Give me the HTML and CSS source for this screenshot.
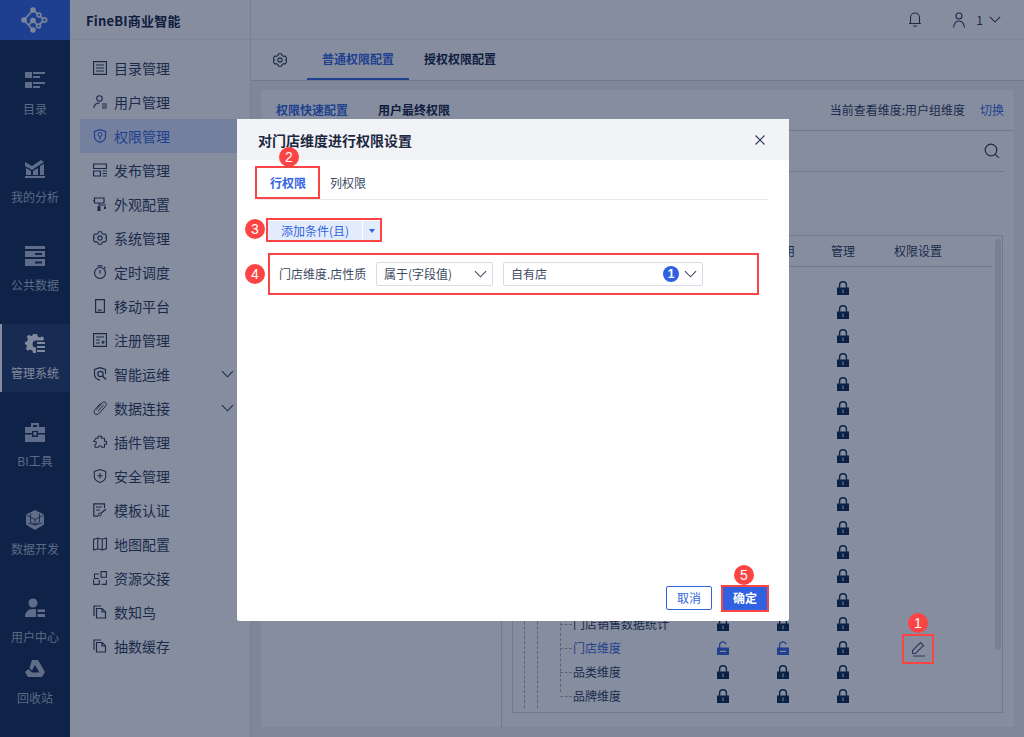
FILE: index.html
```html
<!DOCTYPE html>
<html lang="zh-CN">
<head>
<meta charset="utf-8">
<title>FineBI商业智能</title>
<link rel="stylesheet" href="styles.css">
</head>
<body>
<svg class="defs" width="0" height="0" aria-hidden="true">
  <defs>
    <symbol id="lock" viewBox="0 0 12 14"><path d="M2.6 7V4.2a3.4 3.4 0 0 1 6.8 0V7" fill="none" stroke="currentColor" stroke-width="1.4"/><path d="M0 6.5h12V14H0z" fill="currentColor"/><path d="M5.4 8.6h1.2v3.6H5.4z" fill="#c5cad6"/></symbol>
    <symbol id="unlock" viewBox="0 0 12 14"><path d="M2.6 7V4.2a3.4 3.4 0 0 1 6.6-1" fill="none" stroke="currentColor" stroke-width="1.3"/><path d="M0 6.5h12V14H0z" fill="currentColor"/><path d="M3 9.8h6v1.2H3z" fill="#fff"/></symbol>
    <symbol id="chev" viewBox="0 0 14 8"><path d="M1 1l6 6 6-6" fill="none" stroke="currentColor" stroke-width="1.2"/></symbol>
    <symbol id="page" viewBox="0 0 14 14"><path d="M1 11V1h7M3.5 13V3.5H9L12.5 7v6z" fill="none" stroke="currentColor" stroke-width="1.2"/><path d="M9 3.5V7h3.5" fill="none" stroke="currentColor" stroke-width="1.2"/></symbol>
    <symbol id="gear" viewBox="0 0 14 14"><path d="M5.4.8h3.2l.5 1.700 1.500.9 1.700-.4 1.600 2.700L12.600 7l1.300 1.300-1.600 2.700-1.700-.4-1.500.9-.5 1.700H5.400l-.5-1.700-1.500-.9-1.700.4L.1 8.300 1.400 7 .1 5.700l1.600-2.700 1.700.4 1.500-.9z" fill="none" stroke="currentColor" stroke-width="1.100" stroke-linejoin="round"/><circle cx="7" cy="7" r="2.100" fill="none" stroke="currentColor" stroke-width="1.100"/></symbol>
  </defs>
</svg>

<div class="app">
  <aside class="rail">
    <div class="logo">
      <svg class="logo-mark" viewBox="0 0 28 28"><g fill="none" stroke="#dfe5f2" stroke-width="1.800"><path d="M12 4L3 14l9 10M12 4l6 5M12 14l-4 5M12 14l5 6 6-6-5-5"/><circle cx="18" cy="9" r="1.900" fill="#2f61e1"/><circle cx="23.500" cy="14" r="2.100" fill="#2f61e1"/><circle cx="17.500" cy="20" r="1.900" fill="#2f61e1"/></g><g fill="#eef1f7"><circle cx="12" cy="4" r="2.800"/><circle cx="3" cy="14" r="2.800"/><circle cx="12" cy="14.500" r="2.800"/><circle cx="12" cy="24" r="2.800"/></g></svg>
    </div>
    <nav class="rail-nav">
      <a class="rail-item">
        <svg class="rail-icon" viewBox="0 0 20 20"><path d="M0 2h7v6H0zM0 12h7v6H0zM8 2h12v2H8zM8 6h7v2H8zM8 12h12v2H8zM8 16h7v2H8z"/></svg>
        <span>目录</span>
      </a>
      <a class="rail-item">
        <svg class="rail-icon" viewBox="0 0 20 20"><path d="M0 4l7 4 9-6 3 2-12 8-7-4zM1 10l5 3v4H1zM8 13l5-3v7H8zM15 8l4-2v11h-4zM0 18h20v2H0z"/></svg>
        <span>我的分析</span>
      </a>
      <a class="rail-item">
        <svg class="rail-icon" viewBox="0 0 20 20"><path d="M0 0h20v3H0zM0 5h20v6H0zM0 13h20v7H0z" fill-rule="evenodd"/><path d="M10 7h7v2h-7zM10 15.500h7v2h-7z" fill="#0f2b51"/></svg>
        <span>公共数据</span>
      </a>
      <a class="rail-item rail-item-active">
        <svg class="rail-icon" viewBox="0 0 20 20"><path d="M8 0h4l.6 2.500 2.400 1 2.200-1.300 2 2-1.200 2.300H11a3.500 3.500 0 1 0 0 7v5.500H8l-.6-2.500-2.400-1-2.200 1.300-2-2L2 12.500 1 10.500-.5 10V8l2.500-.6 1-2.400L1.700 2.800l2-2L6 2l1.400-.5z"/><path d="M12 8h8v2h-8zM12 12h8v2h-8zM12 16h8v2h-8z"/></svg>
        <span>管理系统</span>
      </a>
      <a class="rail-item">
        <svg class="rail-icon" viewBox="0 0 20 20"><path d="M6 1h8v4h-2V3H8v2H6zM0 5h20v6h-7V9H7v2H0zM0 12.500h7V15h6v-2.500h7V20H0zM8.500 10h3v3.500h-3z"/></svg>
        <span>BI工具</span>
      </a>
      <a class="rail-item">
        <svg class="rail-icon" viewBox="0 0 20 20"><path d="M10 0l9 4.500v10L10 20l-9-5.500v-10z"/><path d="M1.500 5L10 9.500 18.500 5M10 9.500V15M3 13l7 2 7-2M5.500 3.500v8.500l4.500 3 4.500-3V3.500" fill="none" stroke="#0f2b51" stroke-width=".8"/></svg>
        <span>数据开发</span>
      </a>
      <a class="rail-item">
        <svg class="rail-icon" viewBox="0 0 20 20"><circle cx="8" cy="5" r="4.500"/><path d="M0 19c0-5 3-8 8-8 1 0 2 .1 3 .5V19zM12.500 11.500H20v2.500h-7.500zM12.500 16H20v3h-7.500z"/></svg>
        <span>用户中心</span>
      </a>
      <a class="rail-item rail-item-last">
        <svg class="rail-icon" viewBox="0 0 20 20"><path d="M7 1h6l7 12-3 5-7-12-3 5.500L4.500 9zM0 13l3.500-3 3.500 3.500h12L17 18H3z"/></svg>
        <span>回收站</span>
      </a>
    </nav>
  </aside>

  <aside class="menu">
    <div class="brand">FineBI商业智能</div>
    <nav class="menu-list">
      <a class="menu-item"><svg class="menu-icon" viewBox="0 0 14 14"><path d="M.6.6h12.800v12.800H.6zM3 4h8M3 7h8M3 10h8" fill="none" stroke="currentColor" stroke-width="1.2"/></svg><span>目录管理</span></a>
      <a class="menu-item"><svg class="menu-icon" viewBox="0 0 14 14"><circle cx="6.500" cy="3.500" r="2.700" fill="none" stroke="currentColor" stroke-width="1.1"/><path d="M.8 13c.3-3 2.500-5 6-5M9 9h5M9 11h5M9 13h5" fill="none" stroke="currentColor" stroke-width="1.1"/></svg><span>用户管理</span></a>
      <a class="menu-item menu-item-active"><svg class="menu-icon" viewBox="0 0 14 14"><path d="M7 .6l5.500 1.800v5.100c0 2.900-2.500 4.900-5.500 5.900-3-1-5.500-3-5.500-5.900V2.400z" fill="none" stroke="currentColor" stroke-width="1.200"/><circle cx="7" cy="5.500" r="2" fill="none" stroke="currentColor"/><path d="M7 7.500v3" stroke="currentColor" stroke-width="1.200"/></svg><span>权限管理</span></a>
      <a class="menu-item"><svg class="menu-icon" viewBox="0 0 14 14"><path d="M.6 1h12.800v4.500H.6zM.6 8h6.800v5H.6zM9.500 8H14M9.500 10.500H14M9.500 13H14" fill="none" stroke="currentColor" stroke-width="1.200"/></svg><span>发布管理</span></a>
      <a class="menu-item"><svg class="menu-icon" viewBox="0 0 14 14"><path d="M1.500 1h9.500v5H1.500zM6 6v2h7M0 3.500h1.500" fill="none" stroke="currentColor" stroke-width="1.200"/><path d="M4.500 9h3v5h-3zM11 9.500h2V12h-2z" fill="currentColor"/></svg><span>外观配置</span></a>
      <a class="menu-item"><svg class="menu-icon"><use href="#gear"/></svg><span>系统管理</span></a>
      <a class="menu-item"><svg class="menu-icon" viewBox="0 0 14 14"><circle cx="7" cy="8" r="5.500" fill="none" stroke="currentColor" stroke-width="1.200"/><path d="M7 5v3.500M4.500.8h5M11 2l1.500 1.500" fill="none" stroke="currentColor" stroke-width="1.200"/></svg><span>定时调度</span></a>
      <a class="menu-item"><svg class="menu-icon" viewBox="0 0 14 14"><path d="M2.600.6h8.800v12.800H2.600z" fill="none" stroke="currentColor" stroke-width="1.200"/><path d="M5 10.500h3.500v1.200H5z" fill="currentColor"/></svg><span>移动平台</span></a>
      <a class="menu-item"><svg class="menu-icon" viewBox="0 0 14 14"><path d="M.6.6h12.800v12.800H.6zM3 4h8M3 7h4M3 10h4M10 7.500v3.500M8.300 9.200h3.400" fill="none" stroke="currentColor" stroke-width="1.200"/></svg><span>注册管理</span></a>
      <a class="menu-item"><svg class="menu-icon" viewBox="0 0 14 14"><path d="M7 .6l5.500 1.800V7M7 13.400C4 12.400 1.500 10.400 1.500 7.500V2.400L7 .6" fill="none" stroke="currentColor" stroke-width="1.200"/><circle cx="7.500" cy="7" r="2.700" fill="none" stroke="currentColor" stroke-width="1.200"/><path d="M9.500 9l3.500 3.500" stroke="currentColor" stroke-width="1.400"/></svg><span>智能运维</span><svg class="menu-chev"><use href="#chev"/></svg></a>
      <a class="menu-item"><svg class="menu-icon" viewBox="0 0 14 14"><path d="M3.500 8.500L9 2c1-1.200 2.800-1.300 3.700-.4s.7 2.500-.3 3.700L6.300 12.300c-1.300 1.400-3.300 1.500-4.400.5S.9 9.800 2 8.500L7.500 2.300M5 10.200l5.500-6.400" fill="none" stroke="currentColor" stroke-width="1"/></svg><span>数据连接</span><svg class="menu-chev"><use href="#chev"/></svg></a>
      <a class="menu-item"><svg class="menu-icon" viewBox="0 0 14 14"><path d="M5 1.200h3.500v2h3v3h2v3h-2v3H8.500c0-2-3-2-3 0H2V9.500c1.800 0 1.800-3 0-3H.6L3 3.200h2z" fill="none" stroke="currentColor" stroke-width="1.100" stroke-linejoin="round"/></svg><span>插件管理</span></a>
      <a class="menu-item"><svg class="menu-icon" viewBox="0 0 14 14"><path d="M7 .6l5.700 1.900v5c0 2.900-2.600 4.900-5.700 5.900-3.100-1-5.700-3-5.700-5.900v-5zM7 4v5.500M4.300 6.800h5.400" fill="none" stroke="currentColor" stroke-width="1.100"/></svg><span>安全管理</span></a>
      <a class="menu-item"><svg class="menu-icon" viewBox="0 0 14 14"><path d="M11.500 5V.8H.8v12.400H5M3 4h6M3 7h4" fill="none" stroke="currentColor" stroke-width="1.200"/><circle cx="6.800" cy="11.500" r="1.500" fill="none" stroke="currentColor"/><path d="M8 10.300l5-4.300" stroke="currentColor" stroke-width="1.200"/></svg><span>模板认证</span></a>
      <a class="menu-item"><svg class="menu-icon" viewBox="0 0 14 14"><path d="M.6 2.200L4.800 1l4.400 1.200L13.400 1v10.800l-4.200 1.200-4.400-1.200-4.200 1.200zM4.800 1v10.800M9.200 2.200V13" fill="none" stroke="currentColor" stroke-width="1.100"/></svg><span>地图配置</span></a>
      <a class="menu-item"><svg class="menu-icon" viewBox="0 0 14 14"><path d="M8 .6h5.400v5.700H8zM8 .6v6M6 3H1.500v4.500H6M.6 8.500v4.900h5.700V9M8.500 13.400h4.900V9" fill="none" stroke="currentColor" stroke-width="1.100"/></svg><span>资源交接</span></a>
      <a class="menu-item"><svg class="menu-icon"><use href="#page"/></svg><span>数知鸟</span></a>
      <a class="menu-item"><svg class="menu-icon"><use href="#page"/></svg><span>抽数缓存</span></a>
    </nav>
  </aside>

  <main class="main">
    <header class="topbar">
      <svg class="top-bell" viewBox="0 0 14 16"><path d="M2.500 12.500V6.500a4.500 4.500 0 0 1 9 0v6zM1 12.500h12M5 15h4" fill="none" stroke="currentColor" stroke-width="1.100"/></svg>
      <div class="top-user">
        <svg class="top-user-icon" viewBox="0 0 14 16"><circle cx="7" cy="4" r="3" fill="none" stroke="currentColor" stroke-width="1.100"/><path d="M1.500 15.500C2 11 4 9 7 9s5 2 5.500 6.500" fill="none" stroke="currentColor" stroke-width="1.100"/></svg>
        <span>1</span>
        <svg class="top-chev"><use href="#chev"/></svg>
      </div>
    </header>
    <div class="tabs">
      <svg class="tabs-gear"><use href="#gear"/></svg>
      <a class="tab tab-on">普通权限配置</a>
      <a class="tab">授权权限配置</a>
    </div>
    <section class="content">
      <div class="card">
        <div class="card-head">
          <a class="card-tab card-tab-on">权限快速配置</a>
          <a class="card-tab">用户最终权限</a>
          <span class="card-view">当前查看维度:用户组维度</span>
          <a class="card-switch">切换</a>
        </div>
        <div class="card-body">
          <div class="pane-left"></div>
          <div class="pane-right">
            <div class="searchbar">
              <svg class="search-icon" viewBox="0 0 16 16"><circle cx="7" cy="7" r="5.800" fill="none" stroke="currentColor" stroke-width="1.200"/><path d="M11.200 11.200l3.600 3.600" stroke="currentColor" stroke-width="1.200"/></svg>
            </div>
            <div class="table">
              <div class="thead">
                <span class="cell"></span><span class="cell cell-c"></span><span class="cell cell-c">使用</span><span class="cell cell-c">管理</span><span class="cell cell-set">权限设置</span>
              </div>
              <div class="tbody">
                <i class="guide guide-a"></i><i class="guide guide-b"></i><i class="guide guide-c"></i>
                <div class="row"><span></span><span></span><span></span><svg class="lock"><use href="#lock"/></svg></div>
                <div class="row"><span></span><span></span><span></span><svg class="lock"><use href="#lock"/></svg></div>
                <div class="row"><span></span><span></span><span></span><svg class="lock"><use href="#lock"/></svg></div>
                <div class="row"><span></span><span></span><span></span><svg class="lock"><use href="#lock"/></svg></div>
                <div class="row"><span></span><span></span><span></span><svg class="lock"><use href="#lock"/></svg></div>
                <div class="row"><span></span><span></span><span></span><svg class="lock"><use href="#lock"/></svg></div>
                <div class="row"><span></span><span></span><span></span><svg class="lock"><use href="#lock"/></svg></div>
                <div class="row"><span></span><span></span><span></span><svg class="lock"><use href="#lock"/></svg></div>
                <div class="row"><span></span><span></span><span></span><svg class="lock"><use href="#lock"/></svg></div>
                <div class="row"><span></span><span></span><span></span><svg class="lock"><use href="#lock"/></svg></div>
                <div class="row"><span></span><span></span><span></span><svg class="lock"><use href="#lock"/></svg></div>
                <div class="row"><span></span><span></span><span></span><svg class="lock"><use href="#lock"/></svg></div>
                <div class="row"><span></span><span></span><span></span><svg class="lock"><use href="#lock"/></svg></div>
                <div class="row"><span></span><span></span><span></span><svg class="lock"><use href="#lock"/></svg></div>
                <div class="row"><span class="name"><b class="dash"></b>门店销售数据统计</span><svg class="lock"><use href="#lock"/></svg><svg class="lock"><use href="#lock"/></svg><svg class="lock"><use href="#lock"/></svg></div>
                <div class="row"><span class="name name-on"><b class="dash"></b>门店维度</span><svg class="lock lock-on"><use href="#unlock"/></svg><svg class="lock lock-on"><use href="#unlock"/></svg><svg class="lock"><use href="#lock"/></svg></div>
                <div class="row"><span class="name"><b class="dash"></b>品类维度</span><svg class="lock"><use href="#lock"/></svg><svg class="lock"><use href="#lock"/></svg><svg class="lock"><use href="#lock"/></svg></div>
                <div class="row"><span class="name"><b class="dash"></b>品牌维度</span><svg class="lock"><use href="#lock"/></svg><svg class="lock"><use href="#lock"/></svg><svg class="lock"><use href="#lock"/></svg></div>
              </div>
              <div class="scroll"></div>
            </div>
          </div>
        </div>
      </div>
    </section>
  </main>
</div>

<div class="overlay"></div>

<div class="modal">
  <div class="modal-head">
    <span class="modal-title">对门店维度进行权限设置</span>
    <svg class="modal-close" viewBox="0 0 10 10"><path d="M.5.500l9 9M9.500.500l-9 9" stroke="currentColor" stroke-width="1.100"/></svg>
  </div>
  <div class="modal-tabs">
    <a class="modal-tab modal-tab-on">行权限</a>
    <a class="modal-tab">列权限</a>
  </div>
  <div class="add">
    <span class="add-main">添加条件(且)</span>
    <span class="add-more"><i class="caret"></i></span>
  </div>
  <div class="cond">
    <span class="cond-label">门店维度.店性质</span>
    <div class="select select-op"><span>属于(字段值)</span><svg class="select-chev"><use href="#chev"/></svg></div>
    <div class="select select-val"><span>自有店</span><b class="count">1</b><svg class="select-chev"><use href="#chev"/></svg></div>
  </div>
  <div class="modal-foot">
    <a class="btn">取消</a>
    <a class="btn btn-primary">确定</a>
  </div>
</div>

<div class="mark mark-1">1</div>
<div class="mark mark-2">2</div>
<div class="mark mark-3">3</div>
<div class="mark mark-4">4</div>
<div class="mark mark-5">5</div>
<div class="box box-1"><svg class="pen" viewBox="0 0 16 16"><path d="M10.500 1.500l3 3-8 8H2.500v-3zM3 15h12" fill="none" stroke="#2b3957" stroke-width="1.100"/></svg></div>
<div class="box box-2"></div>
<div class="box box-3"></div>
<div class="box box-4"></div>
<div class="box box-5"></div>
</body>
</html>
```
FILE: styles.css
```css
* { box-sizing: border-box; }
html, body { margin: 0; height: 100%; }
body {
  width: 1024px;
  height: 737px;
  overflow: hidden;
  position: relative;
  font: 12px/20px "Noto Sans CJK SC", "Noto Sans", sans-serif;
  color: #2b3957;
  background: #fff;
}
a { color: inherit; text-decoration: none; }
.defs { position: absolute; }

.app { display: flex; height: 737px; }

/* left rail */
.rail { width: 70px; flex: none; background: #0f2b51; display: flex; flex-direction: column; }
.logo { height: 40px; background: #2f61e1; display: flex; align-items: center; justify-content: center; }
.logo-mark { width: 28px; height: 28px; }
.rail-nav { display: flex; flex-direction: column; gap: 20px; padding-top: 20px; }
.rail-item { height: 68px; padding-top: 10px; display: flex; flex-direction: column; align-items: center; gap: 9px; color: #a9b6cb; }
.rail-icon { width: 20px; height: 20px; fill: #b3bfd3; display: block; }
.rail-item-active { background: #233b67; border-left: 2px solid #fff; color: #f4f6fa; padding-right: 2px; }
.rail-item-active .rail-icon { fill: #f4f6fa; }
.rail-item-last { margin-top: -27px; }

/* second menu */
.menu { width: 181px; flex: none; background: #fff; border-right: 1px solid #dfe3e8; }
.brand { height: 40px; padding-left: 16px; font-size: 13px; font-weight: 700; line-height: 42px; letter-spacing: .2px; color: #0f2040; border-bottom: 1px solid #eef0f3; }
.menu-list { display: flex; flex-direction: column; padding: 11px 0 0 10px; }
.menu-item { height: 34px; display: flex; align-items: center; gap: 7px; padding-left: 13px; font-size: 14px; position: relative; }
.menu-icon { width: 14px; height: 14px; flex: none; color: #2b3957; }
.menu-item-active { background: #dbe5ff; color: #3165e0; }
.menu-item-active .menu-icon { color: #3165e0; }
.menu-chev { width: 13px; height: 8px; margin-left: auto; margin-right: 16px; color: #2b3957; }

/* main */
.main { flex: 1; min-width: 0; display: flex; flex-direction: column; }
.topbar { height: 40px; flex: none; display: flex; align-items: center; justify-content: flex-end; padding-right: 23px; border-bottom: 1px solid #eef0f3; }
.top-bell { width: 14px; height: 16px; margin-right: 30px; margin-top: -2px; color: #2b3957; }
.top-user { display: flex; align-items: center; color: #2b3957; }
.top-user-icon { width: 14px; height: 16px; margin-right: 10px; }
.top-chev { width: 12px; height: 7px; margin-left: 6px; }
.tabs { height: 41px; flex: none; display: flex; border-bottom: 1px solid #d3d7dd; align-items: stretch; }
.tabs-gear { width: 14px; height: 14px; margin: 13px 20px 0 22px; color: #2b3957; }
.tab { padding: 0 15px; line-height: 38px; font-weight: 700; color: #0f2040; }
.tab-on { color: #3165e0; border-bottom: 2px solid #3165e0; height: 40px; }

.content { flex: 1; min-height: 0; background: #eff3f5; padding: 9px 10px 10px 10px; display: flex; }
.card { flex: 1; background: #fff; display: flex; flex-direction: column; }
.card-head { height: 41px; flex: none; display: flex; align-items: center; padding: 0 10px 0 15px; border-bottom: 1px solid #d3d7dd; }
.card-tab { font-weight: 700; color: #0f2040; margin-right: 30px; }
.card-tab-on { color: #3165e0; }
.card-view { margin-left: auto; }
.card-switch { margin-left: 15px; color: #3165e0; }
.card-body { flex: 1; display: flex; min-height: 0; }
.pane-left { width: 241px; flex: none; border-right: 1px solid #d3d7dd; }
.pane-right { flex: 1; min-width: 0; padding-left: 10px; padding-right: 11px; display: flex; flex-direction: column; }
.searchbar { height: 41px; flex: none; display: flex; align-items: center; justify-content: flex-end; border-bottom: 1px solid #d3d7dd; padding-right: 4px; margin-right: -1px; }
.search-icon { width: 16px; height: 16px; color: #2b3957; }
.table { margin-top: 63px; height: 478px; width: 491px; border: 1px solid #d3d7dd; position: relative; flex: none; }
.thead { height: 31px; margin-right: 10px; display: grid; grid-template-columns: 180px 60px 60px 60px 1fr; align-items: center; border-bottom: 1px solid #d3d7dd; }
.cell-c { text-align: center; }
.cell-set { padding-left: 21px; }
.tbody { position: relative; padding-top: 9px; }
.row { height: 24px; display: grid; grid-template-columns: 180px 60px 60px 60px; align-items: center; justify-items: center; }
.name { justify-self: start; padding-left: 60px; position: relative; white-space: nowrap; }
.name-on { color: #3165e0; }
.dash { position: absolute; left: 47px; top: 10px; width: 12px; border-top: 1px dashed #a3a9b4; }
.lock { width: 12px; height: 14px; color: #09274d; }
.lock-on { color: #3165e0; }
.guide { position: absolute; width: 0; border-left: 1px dashed #a3a9b4; }
.guide-a { left: 11px; top: 320px; bottom: 0; }
.guide-b { left: 24px; top: 320px; bottom: 0; }
.guide-c { left: 47px; top: 320px; bottom: 16px; }
.scroll { position: absolute; right: 1px; top: 3px; width: 6px; height: 411px; border-radius: 3px; background: #e0e4ea; }

/* overlay + modal */
.overlay { position: absolute; inset: 0; background: rgba(13, 27, 61, .5); z-index: 10; }
.modal { position: absolute; left: 237px; top: 119px; width: 552px; height: 502px; background: #fff; border-radius: 2px; z-index: 20; display: flex; flex-direction: column; }
.modal-head { height: 41px; flex: none; background: #f2f3f7; display: flex; align-items: center; justify-content: space-between; padding: 0 24px 0 21px; }
.modal-title { font-size: 14px; font-weight: 700; color: #1c2740; }
.modal-close { width: 10px; height: 10px; color: #2b3957; }
.modal-tabs { height: 40px; flex: none; margin: 0 21px 0 20px; display: flex; border-bottom: 1px solid #e6e8ee; }
.modal-tab { padding: 0 12px; line-height: 46px; color: #3d4a63; }
.modal-tab:first-child { padding-left: 13px; }
.modal-tab-on { color: #3165e0; font-weight: 700; }
.add { display: flex; width: 113px; height: 20px; margin: 21px 0 0 30px; background: #e3ecfc; color: #3165e0; }
.add-main { flex: 1; padding-left: 14px; border-right: 1px solid #fff; }
.add-more { width: 17px; display: flex; align-items: center; justify-content: center; }
.caret { width: 0; height: 0; border: 3px solid transparent; border-top: 4px solid #3165e0; border-bottom: 0; }
.cond { display: flex; align-items: center; margin: 21px 0 0 42px; }
.cond-label { width: 97px; flex: none; color: #3d4a63; white-space: nowrap; }
.select { height: 24px; border: 1px solid #d9dce6; border-radius: 2px; display: flex; align-items: center; padding: 0 5px 0 7px; color: #3d4a63; }
.select-op { width: 117px; justify-content: space-between; margin-right: 10px; }
.select-val { width: 200px; }
.select-chev { width: 13px; height: 8px; color: #3d4a63; margin-left: auto; flex: none; }
.count { margin-left: auto; width: 16px; height: 16px; border-radius: 50%; background: #2f61e0; color: #fff; font: 700 12px/16px "Liberation Sans", sans-serif; text-align: center; }
.select-val .select-chev { margin-left: 5px; }
.modal-foot { margin-top: auto; padding: 0 21px 11px 0; display: flex; justify-content: flex-end; gap: 10px; }
.btn { width: 46px; height: 24px; border: 1px solid #3165e0; border-radius: 2px; color: #3165e0; text-align: center; line-height: 22px; }
.btn-primary { background: #2f61e0; color: #fff; font-weight: 700; }

/* callouts */
.mark { position: absolute; width: 20px; height: 20px; border-radius: 50%; background: #fb4444; color: #fff; font: 14px/20px "Liberation Sans", sans-serif; text-align: center; z-index: 30; }
.mark-1 { left: 908px; top: 613px; }
.mark-2 { left: 279px; top: 147px; }
.mark-3 { left: 245px; top: 219px; }
.mark-4 { left: 245px; top: 264px; }
.mark-5 { left: 734px; top: 565px; }
.box { position: absolute; border: 2px solid #fb4444; z-index: 30; display: flex; align-items: center; justify-content: center; }
.box-1 { left: 902px; top: 634px; width: 32px; height: 30px; }
.box-2 { left: 255px; top: 166px; width: 65px; height: 33px; }
.box-3 { left: 266px; top: 218px; width: 116px; height: 24px; }
.box-4 { left: 268px; top: 253px; width: 491px; height: 42px; }
.box-5 { left: 721px; top: 585px; width: 48px; height: 27px; }
.pen { width: 16px; height: 16px; }
```
